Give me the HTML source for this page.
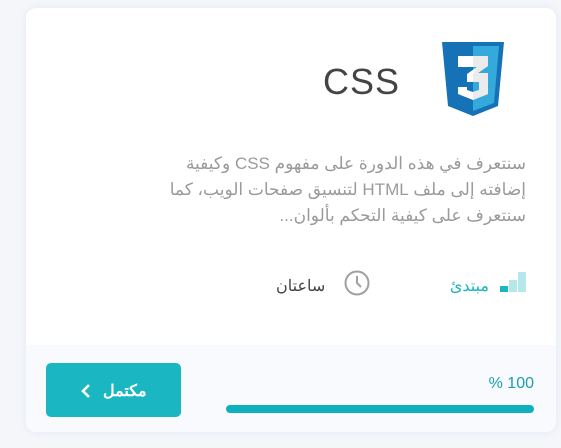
<!DOCTYPE html>
<html><head><meta charset="utf-8"><style>
body{margin:0;width:561px;height:448px;background:#f4f6fa;font-family:"Liberation Sans","Noto Sans CJK SC",sans-serif;overflow:hidden;position:relative}
.card{position:absolute;left:26px;top:8px;width:530px;height:424px;background:#fff;border-radius:10px;box-shadow:0 0 8px rgba(200,210,225,.35);overflow:hidden}
.foot{position:absolute;left:0;right:0;top:337px;bottom:0;background:#f9fafd}
.t{position:absolute;white-space:nowrap}
</style></head><body>
<div class="card">
<div class="foot"></div>
<svg style="position:absolute;left:414px;top:32px" width="66" height="78" viewBox="0 0 66 78">
<path d="M2 2H64L58 66L33 76L8 66Z" fill="#1572b6"/>
<path d="M33 6H59L54 63L33 71Z" fill="#33a9dc"/>
<path d="M18 16H48V26L38 33H48V54L33 60L18 54V47H27V50L33 52L39 50V42H27V34L37 27H18Z" fill="#fff"/>
<path d="M33 16H48V26L38 33H48V54L33 60V52L39 50V42H33V34L37 27H33Z" fill="#ebebeb"/>
</svg>
<div class="t" style="right:156px;top:53px;font-size:36px;color:#444;letter-spacing:1px">CSS</div>
<div style="position:absolute;right:30px;top:143px;width:385px;direction:rtl;text-align:right;font-size:17px;line-height:26px;color:#9a9a9a">سنتعرف في هذه الدورة على مفهوم CSS وكيفية إضافته إلى ملف HTML لتنسيق صفحات الويب، كما سنتعرف على كيفية التحكم بألوان...</div>
<svg style="position:absolute;left:474px;top:262px" width="28" height="24"><rect x="0" y="16" width="8" height="6" fill="#1ab7c2"/><rect x="9" y="10" width="8" height="12" fill="#b6e7eb"/><rect x="18" y="2" width="8" height="20" fill="#b6e7eb"/></svg>
<div class="t" style="right:67px;top:268px;font-size:16px;color:#1ab7c2;direction:rtl">مبتدئ</div>
<svg style="position:absolute;left:318px;top:262px" width="26" height="26" viewBox="0 0 26 26"><circle cx="13" cy="13" r="11.5" fill="none" stroke="#a0a0a0" stroke-width="2"/><path d="M13 6V13L17 17" fill="none" stroke="#a0a0a0" stroke-width="2"/></svg>
<div class="t" style="left:250px;top:268px;font-size:16px;color:#444;direction:rtl">ساعتان</div>
<div style="position:absolute;left:20px;top:355px;width:135px;height:54px;background:#1ab7c2;border-radius:5px"></div>
<div class="t" style="left:77px;top:373px;font-size:16px;color:#fff;font-weight:bold;direction:rtl">مكتمل</div>
<svg style="position:absolute;left:54px;top:375px" width="12" height="16"><path d="M9 2L3 8L9 14" fill="none" stroke="#fff" stroke-width="2.6"/></svg>
<div class="t" style="right:22px;top:367px;font-size:16px;color:#1a9fb0">% 100</div>
<div style="position:absolute;left:200px;top:397px;width:308px;height:8px;border-radius:4px;background:#0fb0bd"></div>
</div>
</body></html>
